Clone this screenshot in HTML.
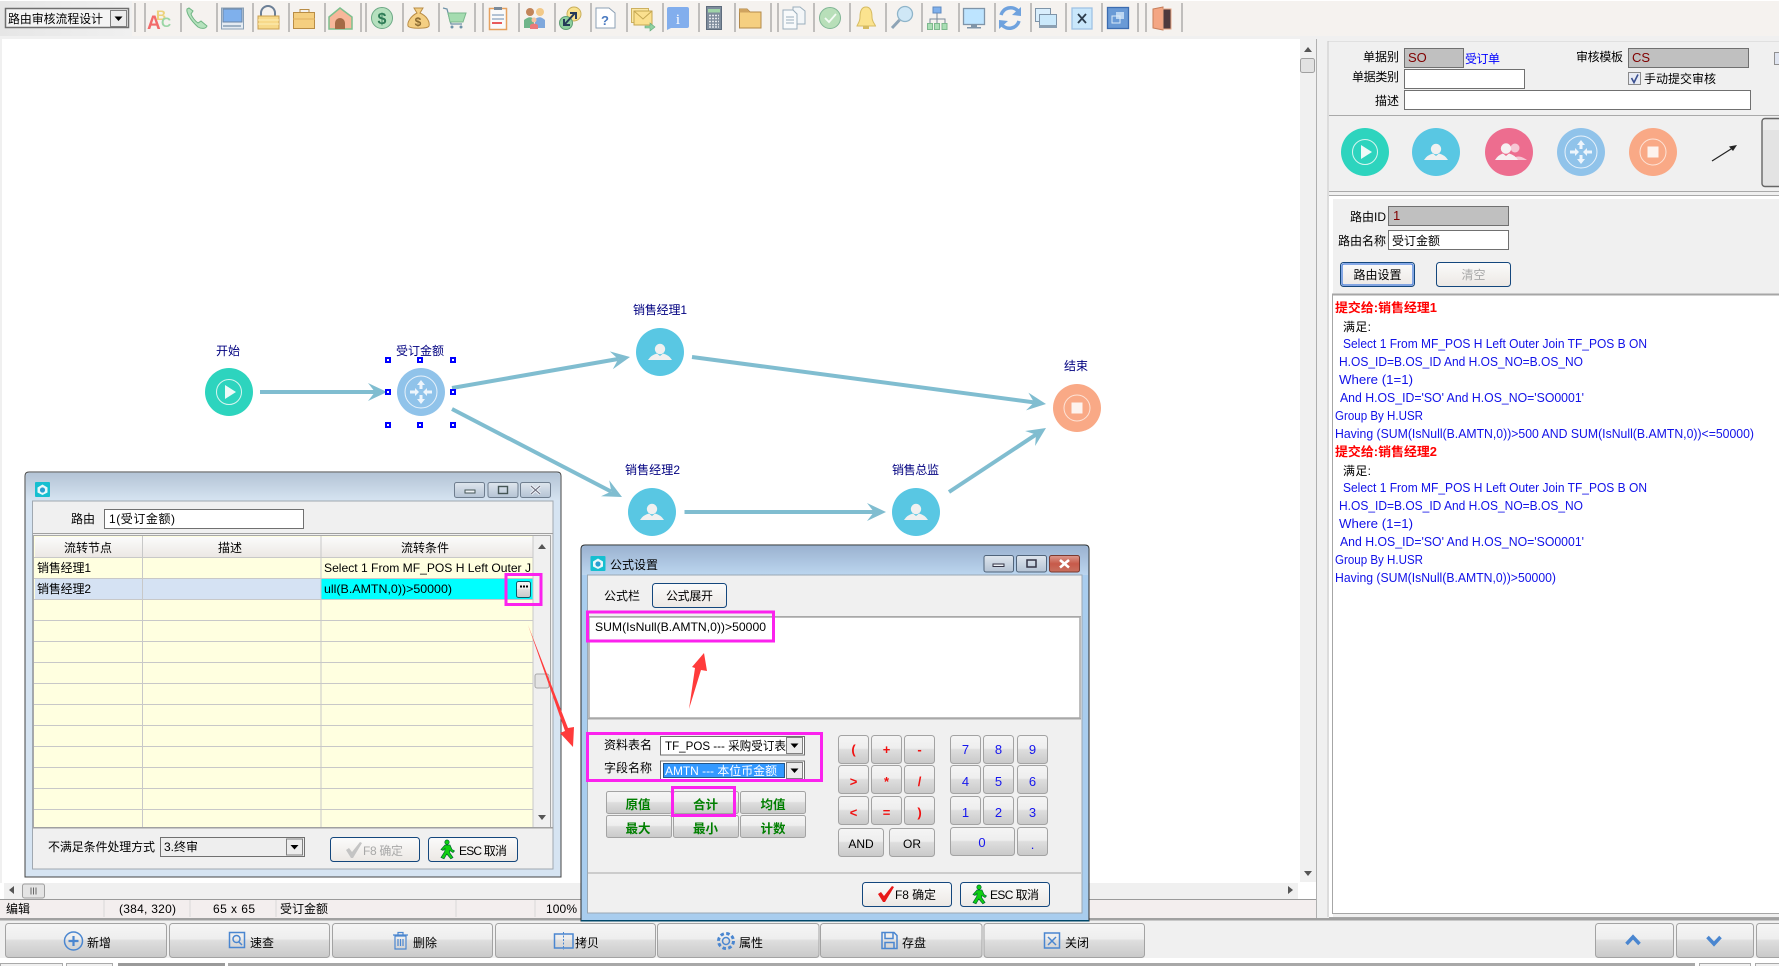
<!DOCTYPE html>
<html lang="zh"><head><meta charset="utf-8"><title>路由审核流程设计</title>
<style>
html,body{margin:0;padding:0;background:#fff;overflow:hidden}
svg{display:block}
text{font-family:"Liberation Sans","Noto Sans CJK SC",sans-serif;font-size:12px;fill:#000}
.c{text-anchor:middle}.r{text-anchor:end}
.b{fill:url(#g);stroke:#a3a3a3;stroke-width:1}
.d{fill:url(#w);stroke:#14477d;stroke-width:1}
.in{fill:#fff;stroke:#707070;stroke-width:1}
.gr{fill:#c0c0c0;stroke:#707070;stroke-width:1}
.m{fill:none;stroke:#fb22ee;stroke-width:3}
.n text,text.n{fill:#000080;font-size:12px}
.bl{fill:#1111e8;font-size:12.5px}
.rd{fill:#ff0000;font-weight:bold;font-size:12.5px}
.gb{fill:#007f00;font-weight:bold;text-anchor:middle;font-size:12.5px}
.cr{fill:#f01010;font-weight:bold;text-anchor:middle;font-size:13px}
.cb{fill:#1616ee;text-anchor:middle;font-size:13px}
.sep{stroke:#8a8a8a;stroke-width:1}
.ar{stroke:#80bdd0;stroke-width:4;fill:none}
.ah{fill:#80bdd0}
.h{fill:#fff;stroke:#0000ff;stroke-width:2}
.ln{stroke:#c8c8c8;stroke-width:1}
.ic{fill:none;stroke:#4a86d0;stroke-width:1.5}
</style></head><body>
<svg xmlns="http://www.w3.org/2000/svg" width="1779" height="966" viewBox="0 0 1779 966">
<defs>
<linearGradient id="g" x1="0" y1="0" x2="0" y2="1"><stop offset="0" stop-color="#f5f5f5"/><stop offset=".45" stop-color="#eeeeee"/><stop offset=".5" stop-color="#dedede"/><stop offset="1" stop-color="#c9c9c9"/></linearGradient>
<linearGradient id="w" x1="0" y1="0" x2="0" y2="1"><stop offset="0" stop-color="#fbfbfb"/><stop offset="1" stop-color="#ece8e4"/></linearGradient>
<linearGradient id="t1" x1="0" y1="0" x2="0" y2="1"><stop offset="0" stop-color="#b4c4d6"/><stop offset="1" stop-color="#d6e4f1"/></linearGradient>
<linearGradient id="t2" x1="0" y1="0" x2="0" y2="1"><stop offset="0" stop-color="#9bb2d0"/><stop offset="1" stop-color="#bcd6ef"/></linearGradient>
<linearGradient id="wb" x1="0" y1="0" x2="0" y2="1"><stop offset="0" stop-color="#dfe6ee"/><stop offset="1" stop-color="#b4c3d4"/></linearGradient>
<linearGradient id="wc" x1="0" y1="0" x2="0" y2="1"><stop offset="0" stop-color="#dd9a8e"/><stop offset=".5" stop-color="#c75a4a"/><stop offset="1" stop-color="#c9705f"/></linearGradient>
<linearGradient id="tl" x1="0" y1="0" x2="1" y2="0"><stop offset="0" stop-color="#e6e6e6"/><stop offset="1" stop-color="#f0f0f0"/></linearGradient>
<g id="person"><circle cx="0" cy="-3" r="5.2" fill="#f0f0f0"/><path d="M-12,8 Q-9,3 -3,1.5 L0,4 L3,1.5 Q9,3 12,8 Z" fill="#f0f0f0"/></g>
<g id="start"><circle r="24" fill="#2dd4be"/><circle r="12.5" fill="none" stroke="#d8f6f0" stroke-width="1"/><path d="M-4,-7 L7,0 L-4,7 Z" fill="#eefaf8"/></g>
<g id="user"><circle r="24" fill="#59c7e3"/><use href="#person"/></g>
<g id="route"><circle r="24" fill="#90c3ea"/><circle r="16" fill="none" stroke="#e8f2fb" stroke-width="1"/>
<path d="M0,-12 L-4,-7 L-1.5,-7 L-1.5,-3 L1.5,-3 L1.5,-7 L4,-7 Z M0,12 L-4,7 L-1.5,7 L-1.5,3 L1.5,3 L1.5,7 L4,7 Z M-2,0 L-6,-4 L-6,-1.5 L-11,-1.5 L-11,1.5 L-6,1.5 L-6,4 Z M2,0 L6,-4 L6,-1.5 L11,-1.5 L11,1.5 L6,1.5 L6,4 Z" fill="#eef5fc"/></g>
<g id="stop"><circle r="24" fill="#f9a986"/><circle r="13" fill="none" stroke="#fde4d8" stroke-width="1"/><rect x="-5.5" y="-5.5" width="11" height="11" fill="#fdf3ee"/></g>
<g id="appic"><rect x="0" y="0" width="15" height="15" rx="1" fill="#16bfd0"/><path d="M7.5,2.5 L12.5,5.5 L12.5,10.5 L7.5,13 L2.5,10.5 L2.5,5.5 Z" fill="#eaf8fa"/><circle cx="7.5" cy="8" r="2.6" fill="#2a9fd0"/></g>
<g id="drop"><rect x="0" y="0" width="16" height="16" fill="#ececec" stroke="#808080"/><path d="M4,6 L12,6 L8,10.5 Z" fill="#000"/></g>
<g id="man"><path d="M7,0 a2.2,2.2 0 1 1 0,4.4 a2.2,2.2 0 1 1 0,-4.4 Z M5,5 L10,5 L12,9.5 L14.5,11 L13,12.5 L9.8,10.5 L9.5,12.5 L13,17.5 L10.8,18.8 L6.8,14 L4,18.8 L1,17.5 L4.7,11.5 L5,8.5 L3,10.5 L1,9.5 Z" fill="#10d010" stroke="#063" stroke-width=".7"/></g>
<path id="chk" d="M0,8 L3,6 L6,10 L14,0 L16,1 L7,16 L5,16 Z"/>
</defs>

<!-- base -->
<rect width="1779" height="966" fill="#fff"/>
<rect x="0" y="0" width="1779" height="36" fill="#f5f2ef"/>
<rect x="0" y="0" width="1779" height="1" fill="#fff"/>
<rect x="0" y="36" width="1779" height="3" fill="#f0f0f0"/>
<rect x="0" y="1" width="132" height="35" fill="url(#tl)"/>
<rect x="0" y="39" width="2" height="844" fill="#f0f0f0"/>

<!-- toolbar -->
<rect x="5.5" y="8.5" width="123" height="19" fill="#f4f4f4" stroke="#6f6f6f" stroke-width="1.5"/>
<text x="8" y="23" textLength="95" lengthAdjust="spacingAndGlyphs">路由审核流程设计</text>
<use href="#drop" x="110.5" y="10.5"/>
<g class="sep">
<path d="M135,3V32M145,3V32M181,3V32M217,3V32M253,3V32M289,3V32M325,3V32M361,3V32M366,3V32M403,3V32M439,3V32M475,3V32M483,3V32M519,3V32M555,3V32M591,3V32M627,3V32M663,3V32M699,3V32M735,3V32M771,3V32M778,3V32M814,3V32M850,3V32M886,3V32M922,3V32M959,3V32M995,3V32M1031,3V32M1066,3V32M1102,3V32M1138,3V32M1146,3V32M1182,3V32"/>
</g>
<!-- A B C -->
<text x="147" y="29" style="font-size:19px;font-weight:bold;fill:#f26a6a">A</text>
<text x="156" y="20" style="font-size:14px;font-weight:bold;fill:#ecd27c">B</text>
<text x="161" y="27" style="font-size:14px;font-weight:bold;fill:#9bd6a6">C</text>
<!-- phone -->
<path d="M187,9 C186,12 190,20 198,27 C201,29 206,29 207,26 L201,21 L198,23 C195,21 192,17 191,14 L193,11 L189,8 Z" fill="#b5e2bd" stroke="#6fb584"/>
<!-- monitor -->
<rect x="221.5" y="8" width="22" height="21" fill="#e4ebf2" stroke="#8aa0b5"/><rect x="223" y="9" width="19" height="13" fill="#7fb0ec" stroke="#6a85a5"/><rect x="223" y="25" width="18" height="2" fill="#9fb2c4"/>
<!-- lock -->
<path d="M261,16 V13 a7,7 0 0 1 14,0 V16" fill="none" stroke="#6b7f96" stroke-width="2"/><rect x="258" y="16" width="21" height="13" fill="#f7d98a" stroke="#caa04f"/><path d="M258,20H279M258,24H279" stroke="#fdeeb8"/>
<!-- case -->
<path d="M300,13 V9.500 H309 V13" fill="none" stroke="#b98d46"/><rect x="293.500" y="12.500" width="21" height="16" fill="#f5cf80" stroke="#b98d46"/><path d="M293,19H315" stroke="#e1b260"/>
<!-- house -->
<path d="M340,8 L352,17 L352,29 L329,29 L329,17 Z" fill="#f7b79a" stroke="#7cc08e" stroke-width="1.500"/><path d="M335,29 V23 a5,5 0 0 1 10,0 V29 Z" fill="#a46a45"/>
<!-- $ -->
<circle cx="382" cy="18" r="10.500" fill="#b5e0be" stroke="#6ca985"/><text x="382" y="24" class="c" style="font-size:16px;font-weight:bold;fill:#2d7a55">$</text>
<!-- bag -->
<path d="M414,8 L423,8 L420,13 C427,16 430,22 429,26 C428,29 410,29 408,26 C407,22 411,16 417,13 Z" fill="#f4cf83" stroke="#b98d46"/><text x="418" y="26" class="c" style="font-size:12px;font-weight:bold;fill:#8a6a30">$</text>
<!-- cart -->
<path d="M443,8 L447,9 L451,24 L462,24" fill="none" stroke="#6f93a8" stroke-width="1.300"/><path d="M448,13 L466,13 L463,22 L450,22 Z" fill="#a5dcb0" stroke="#79b78c"/><circle cx="452" cy="27" r="1.500" fill="#6f93a8"/><circle cx="461" cy="27" r="1.500" fill="#6f93a8"/>
<!-- clipboard -->
<rect x="489.500" y="8.500" width="17" height="21" fill="#fafafa" stroke="#e6a15f" stroke-width="1.500"/><rect x="494" y="7" width="8" height="3" fill="#7a8a9a"/><path d="M492,15H504M492,19H504" stroke="#9ab0c8" stroke-width="1.500"/><path d="M492,23H502" stroke="#e85a5a" stroke-width="2"/>
<!-- people -->
<circle cx="530" cy="12" r="4" fill="#c2855a"/><circle cx="540" cy="12" r="4" fill="#f2c988"/><path d="M524,28 V20 Q530,15 534,19 V28 Z" fill="#6fb58a"/><path d="M535,28 V19 Q540,15 545,20 V28 Z" fill="#7fa8dc"/><circle cx="534" cy="20" r="2.500" fill="#f5c3a0"/><path d="M530,29 V25 Q534,22 538,25 V29 Z" fill="#ea7a7a"/>
<!-- resize -->
<circle cx="574" cy="14" r="7" fill="#f8e28e" stroke="#c9ae5a"/><circle cx="566" cy="23" r="6.500" fill="#8ecf9e" stroke="#5f9f75"/><path d="M565,24 L575,13 M570,13 H576 V19 M564,19 V25 H570" fill="none" stroke="#243a58" stroke-width="2"/>
<!-- doc ? -->
<path d="M596,8 H609 L615,13 V28 H596 Z" fill="#fff" stroke="#8ca0b4"/><text x="605" y="25" class="c" style="font-size:13px;font-weight:bold;fill:#4a7ac0">?</text>
<!-- mail -->
<rect x="631.500" y="8.500" width="17" height="14" fill="#fbe7a3" stroke="#cdb060"/><rect x="634" y="11" width="18" height="14" fill="#fbe08f" stroke="#c5a752"/><path d="M634,11 L643,19 L652,11" fill="none" stroke="#c5a752"/><path d="M645,26 H650 V23 L655,27 L650,31 V28 H645 Z" fill="#8fd2a2" stroke="#62a87a" stroke-width=".6"/>
<!-- info -->
<path d="M669,7 H687 Q689,7 689,9 V26 Q689,28 687,28 H671 L667,30 V9 Q667,7 669,7 Z" fill="#82aeed"/><text x="678" y="24" class="c" style="font-size:15px;font-family:'Liberation Serif',serif;fill:#fff">i</text>
<!-- calc -->
<rect x="706.500" y="6.500" width="15" height="23" fill="#7e8c9c" stroke="#5e6c7c"/><rect x="708" y="9" width="12" height="3.500" fill="#9fd4a8"/><path d="M709,15.500H719M709,18.500H719M709,21.500H719M709,24.500H719M709,27H719" stroke="#e4e8ec" stroke-width="1.500" stroke-dasharray="2 1"/>
<!-- folder -->
<path d="M739.500,9 H747 L750,12 H761 V28 H739.500 Z" fill="#f5cf80" stroke="#b3894a"/><path d="M739.500,9 H747 L750,12.500 H739.500 Z" fill="#cfa35f"/>
<!-- copy docs -->
<path d="M793,7 H800 L805,11 V24 H793 Z" fill="#f3f6f8" stroke="#9aaebc"/><path d="M783,10 H793 L797,14 V29 H783 Z" fill="#f8fafb" stroke="#9aaebc"/><path d="M786,17H794M786,20H794M786,23H794" stroke="#9aaebc"/>
<!-- check -->
<circle cx="830" cy="18" r="10.500" fill="#b8dfb9" stroke="#7fb594"/><path d="M825,18 L829,22 L836,14" fill="none" stroke="#f4fbf5" stroke-width="1.800"/>
<!-- bell -->
<path d="M866,7 C871,7 872,12 872,17 C872,22 875,24 875.500,26 H857 C857.500,24 860,22 860,17 C860,12 861,7 866,7 Z" fill="#fbe38f" stroke="#d6bb62"/><rect x="863" y="26" width="6" height="3" fill="#d6bb62"/>
<!-- magnifier -->
<circle cx="905" cy="14" r="7.500" fill="#cfe7f6" stroke="#8fb4c9" stroke-width="1.300"/><path d="M899.500,20 L892,28" stroke="#8da3b5" stroke-width="3"/>
<!-- org -->
<rect x="933" y="7" width="8" height="6" fill="#7fb0ec" stroke="#5f8ac0"/><path d="M937,13 V19 M930,24 V19 H945 V24 M937,19 V24" fill="none" stroke="#7a8a9a"/><rect x="927.500" y="23.500" width="5" height="6" fill="#a9dfb4" stroke="#7eb88e"/><rect x="934.500" y="23.500" width="5" height="6" fill="#a9dfb4" stroke="#7eb88e"/><rect x="942" y="23.500" width="5" height="6" fill="#a9dfb4" stroke="#7eb88e"/>
<!-- monitor 2 -->
<rect x="963.500" y="8.500" width="21" height="16" fill="#bde4ff" stroke="#7f94a8" stroke-width="1.300"/><rect x="971" y="25" width="6" height="2" fill="#7f94a8"/><rect x="967" y="27" width="14" height="1.500" fill="#7f94a8"/>
<!-- refresh -->
<path d="M1001,15 A10,10 0 0 1 1018,11 M1019,21 A10,10 0 0 1 1002,25" fill="none" stroke="#6fa2de" stroke-width="3.500"/><path d="M1021,7 L1021,16 L1012,15 Z M999,29 L999,20 L1008,21 Z" fill="#6fa2de"/>
<!-- windows -->
<rect x="1035.500" y="8.500" width="15" height="13" fill="#d9eefc" stroke="#7f94a8"/><rect x="1039.500" y="14.500" width="17" height="13" fill="#cbe9fb" stroke="#7f94a8"/><rect x="1039" y="25" width="18" height="3" fill="#8ca0b2"/>
<!-- x -->
<rect x="1072" y="8" width="20" height="21" fill="#c9e7fb" stroke="#9fc2e4" stroke-width="1.300"/><path d="M1078,14 L1086,23 M1086,14 L1078,23" stroke="#2d3d4d" stroke-width="1.800"/>
<!-- blue win -->
<rect x="1107.500" y="7.500" width="21" height="21" fill="#6a9ad6" stroke="#3c6cb0" stroke-width="1.300"/><rect x="1116" y="12" width="8" height="7" fill="#bcd6f2"/><rect x="1112" y="16" width="8" height="7" fill="none" stroke="#dbe9f8"/>
<!-- door -->
<path d="M1153,9 L1163,7 V30 L1153,28 Z" fill="#f4a683" stroke="#c77e5a"/><rect x="1163" y="9" width="8" height="20" fill="#4e3a3e" stroke="#e8a684"/>

<!-- flow diagram -->
<g>
<path class="ar" d="M260,392H376"/><polygon class="ah" points="387,392 368,383 375,392 368,401"/>
<path class="ar" d="M452,388L618,359"/><polygon class="ah" points="630,357 612.800,369.200 618.200,359.100 609.800,351.400"/>
<path class="ar" d="M452,409L611,491.500"/><polygon class="ah" points="622,497 601,496.300 611.300,491.500 609.200,480.300"/>
<path class="ar" d="M692,357L1034,402.400"/><polygon class="ah" points="1046,404 1026,410.400 1034.100,402.400 1028.400,392.600"/>
<path class="ar" d="M684.500,512H874"/><polygon class="ah" points="886,512 867,521 874,512 867,503"/>
<path class="ar" d="M949,492L1036,434.600"/><polygon class="ah" points="1046,428 1035.100,446 1036,434.600 1025.100,431"/>
</g>
<use href="#start" x="229" y="392"/>
<use href="#route" x="421" y="392"/>
<use href="#user" x="660" y="352"/>
<use href="#user" x="652" y="512"/>
<use href="#user" x="916" y="512"/>
<use href="#stop" x="1077" y="408"/>
<g class="n">
<text x="216" y="355" textLength="24">开始</text>
<text x="396" y="355" textLength="48">受订金额</text>
<text x="633" y="314" textLength="54">销售经理1</text>
<text x="625" y="474" textLength="55">销售经理2</text>
<text x="892" y="474" textLength="47">销售总监</text>
<text x="1064" y="370" textLength="24">结束</text>
</g>
<g class="h">
<rect x="386" y="358" width="4" height="4"/><rect x="418" y="358" width="4" height="4"/><rect x="451" y="358" width="4" height="4"/>
<rect x="386" y="390" width="4" height="4"/><rect x="451" y="390" width="4" height="4"/>
<rect x="386" y="423" width="4" height="4"/><rect x="418" y="423" width="4" height="4"/><rect x="451" y="423" width="4" height="4"/>
</g>

<!-- main scrollbars -->
<rect x="1300" y="39" width="16" height="843" fill="#f0f0f0"/>
<path d="M1304,52 L1312,52 L1308,47 Z" fill="#555"/>
<rect x="1300.500" y="58.500" width="14" height="14" rx="2" fill="#e2e2e2" stroke="#a0a0a0"/>
<path d="M1304,871 L1312,871 L1308,876 Z" fill="#555"/>
<rect x="4" y="883" width="1294" height="16" fill="#f0f0f0"/>
<path d="M14,886 L14,894 L9,890 Z" fill="#555"/>
<rect x="22.500" y="884" width="22" height="14" rx="2" fill="#e4e4e4" stroke="#a0a0a0"/>
<path d="M31,887.500V894.500M33.500,887.500V894.500M36,887.500V894.500" stroke="#666"/>
<path d="M1288,886 L1288,894 L1293,890 Z" fill="#555"/>
<rect x="0" y="899" width="1316" height="1" fill="#9a9a9a"/>
<rect x="0" y="900" width="1316" height="18" fill="#f3eeee"/>
<path d="M104,900V917M190,900V917M276,900V917M456,900V917M535,900V917" stroke="#d8d8d8"/>
<text x="6" y="913" textLength="24">编辑</text>
<text x="119" y="913" textLength="57">(384, 320)</text>
<text x="213" y="913" textLength="42">65 x 65</text>
<text x="280" y="913" textLength="48">受订金额</text>
<text x="546" y="913" textLength="31">100%</text>

<!-- right panel -->
<rect x="1316" y="39" width="463" height="879" fill="#f0f0f0"/>
<rect x="1316" y="39" width="1" height="879" fill="#b0b0b0"/>
<rect x="1328" y="41" width="451" height="1" fill="#e0e0e0"/>
<rect x="1327.500" y="41" width="1" height="876" fill="#c8c8c8"/>
<text x="1399" y="61" class="r" textLength="36">单据别</text>
<rect class="gr" x="1404.500" y="48.500" width="59" height="19"/>
<text x="1408" y="62" style="fill:#800000;font-size:13px">SO</text>
<text x="1465" y="63" style="fill:#0000ff" textLength="35">受订单</text>
<text x="1623" y="61" class="r" textLength="47">审核模板</text>
<rect class="gr" x="1628.500" y="48.500" width="120" height="19"/>
<text x="1632" y="62" style="fill:#800000;font-size:13px">CS</text>
<rect x="1774.500" y="52.500" width="8" height="12" fill="#dfe4f0" stroke="#909090"/>
<text x="1399" y="81" class="r" textLength="47">单据类别</text>
<rect class="in" x="1404.500" y="69.500" width="120" height="19"/>
<rect x="1628.500" y="72.500" width="12" height="12" fill="#e8ebf4" stroke="#8a8a8a"/>
<path d="M1631.500,78 L1634,82.500 L1638,74.500" fill="none" stroke="#3a4f90" stroke-width="1.600"/>
<text x="1644" y="83" textLength="72">手动提交审核</text>
<text x="1399" y="105" class="r" textLength="24">描述</text>
<rect class="in" x="1404.500" y="90.500" width="346" height="19"/>
<rect x="1329" y="115" width="450" height="1" fill="#a9a9a9"/>
<use href="#start" x="1365" y="152"/>
<use href="#user" x="1436" y="152"/>
<g transform="translate(1509,152)"><circle r="24" fill="#ed6d8f"/><circle cx="6" cy="-4" r="4.500" fill="#f6c6d4"/><path d="M3,8 Q8,1 18,8 Z" fill="#f6c6d4"/><circle cx="-3" cy="-3.500" r="5.200" fill="#f6f0f2"/><path d="M-14,8 Q-11,3 -6,1.500 L-3,4 L0,1.500 Q6,3 9,8 Z" fill="#f6f0f2"/></g>
<use href="#route" x="1581" y="152"/>
<use href="#stop" x="1653" y="152"/>
<path d="M1712,161 L1735,146.500" stroke="#222" stroke-width="1.200"/><path d="M1737,145 L1729,146.500 L1733,151 Z" fill="#222"/>
<rect x="1762" y="118.500" width="30" height="68" rx="3" fill="#e3e3e3" stroke="#666" stroke-width="1.400"/>
<rect x="1763" y="120" width="20" height="10" fill="#ececec"/>
<rect x="1329" y="191" width="450" height="1" fill="#a9a9a9"/>
<rect x="1329" y="195" width="450" height="1" fill="#a9a9a9"/>
<rect x="1329" y="196" width="450" height="3" fill="#fff"/>
<rect x="1329" y="196" width="4" height="721" fill="#fff"/>
<text x="1386" y="221" class="r" textLength="36">路由ID</text>
<rect class="gr" x="1388.500" y="206.500" width="120" height="19"/>
<text x="1393" y="220" style="fill:#800000;font-size:13px">1</text>
<text x="1386" y="245" class="r" textLength="48">路由名称</text>
<rect class="in" x="1388.500" y="230.500" width="120" height="19"/>
<text x="1392" y="245" textLength="48">受订金额</text>
<rect class="d" x="1340.500" y="262.500" width="74" height="24" rx="3" style="stroke:#14477d"/>
<rect x="1342" y="264" width="71" height="21" rx="2" fill="none" stroke="#5f8ee0" stroke-width="1.500"/>
<text x="1377.500" y="279" class="c" textLength="48">路由设置</text>
<rect class="d" x="1436.500" y="262.500" width="74" height="24" rx="3"/>
<text x="1473.500" y="279" class="c" style="fill:#a8a8a8" textLength="24">清空</text>
<rect x="1332" y="294" width="447" height="619" fill="#fff"/>
<rect x="1332" y="293.500" width="447" height="2" fill="#a6a6a6"/>
<rect x="1332" y="295" width="1" height="618" fill="#a6a6a6"/>
<rect x="1332" y="913" width="447" height="1" fill="#a6a6a6"/>
<rect x="1329" y="917" width="450" height="1" fill="#a6a6a6"/>

<text class="rd" x="1335" y="312" textLength="102" lengthAdjust="spacingAndGlyphs">提交给:销售经理1</text>
<text x="1343" y="331" textLength="28">满足:</text>
<text class="bl" x="1343" y="348" textLength="304" lengthAdjust="spacingAndGlyphs">Select 1 From MF_POS H Left Outer Join TF_POS B ON</text>
<text class="bl" x="1339" y="366" textLength="244" lengthAdjust="spacingAndGlyphs">H.OS_ID=B.OS_ID And H.OS_NO=B.OS_NO</text>
<text class="bl" x="1339" y="384" textLength="74" lengthAdjust="spacingAndGlyphs">Where (1=1)</text>
<text class="bl" x="1340" y="402" textLength="244" lengthAdjust="spacingAndGlyphs">And H.OS_ID='SO' And H.OS_NO='SO0001'</text>
<text class="bl" x="1335" y="420" textLength="88" lengthAdjust="spacingAndGlyphs">Group By H.USR</text>
<text class="bl" x="1335" y="438" textLength="419" lengthAdjust="spacingAndGlyphs">Having (SUM(IsNull(B.AMTN,0))&gt;500 AND SUM(IsNull(B.AMTN,0))&lt;=50000)</text>
<text class="rd" x="1335" y="456" textLength="102" lengthAdjust="spacingAndGlyphs">提交给:销售经理2</text>
<text x="1343" y="475" textLength="28">满足:</text>
<text class="bl" x="1343" y="492" textLength="304" lengthAdjust="spacingAndGlyphs">Select 1 From MF_POS H Left Outer Join TF_POS B ON</text>
<text class="bl" x="1339" y="510" textLength="244" lengthAdjust="spacingAndGlyphs">H.OS_ID=B.OS_ID And H.OS_NO=B.OS_NO</text>
<text class="bl" x="1339" y="528" textLength="74" lengthAdjust="spacingAndGlyphs">Where (1=1)</text>
<text class="bl" x="1340" y="546" textLength="244" lengthAdjust="spacingAndGlyphs">And H.OS_ID='SO' And H.OS_NO='SO0001'</text>
<text class="bl" x="1335" y="564" textLength="88" lengthAdjust="spacingAndGlyphs">Group By H.USR</text>
<text class="bl" x="1335" y="582" textLength="221" lengthAdjust="spacingAndGlyphs">Having (SUM(IsNull(B.AMTN,0))&gt;50000)</text>

<!-- left window -->
<path d="M25,877 V476 Q25,472 29,472 H557 Q561,472 561,476 V877 Z" fill="#d6e4f2" stroke="#444" stroke-width="1"/>
<path d="M26,501 V476 Q26,473 29,473 H557 Q560,473 560,476 V501 Z" fill="url(#t1)"/>
<use href="#appic" x="35" y="482"/>
<g stroke="#6f7e8f"><rect x="454.500" y="482.500" width="30" height="15" rx="2" fill="url(#wb)"/><rect x="488" y="482.500" width="30" height="15" rx="2" fill="url(#wb)"/><rect x="520.500" y="482.500" width="30" height="15" rx="2" fill="url(#wb)"/></g>
<rect x="465" y="490" width="10" height="3" fill="#eef2f7" stroke="#455"/><rect x="498.500" y="486.500" width="9" height="7" fill="none" stroke="#455" stroke-width="1.400"/><path d="M531,486 L540,494 M540,486 L531,494" stroke="#eef2f7" stroke-width="3"/><path d="M531,486 L540,494 M540,486 L531,494" stroke="#667" stroke-width="1"/>
<rect x="32.500" y="501" width="520.500" height="368" fill="#f0f0f0" stroke="#a0a8b0"/>
<text x="71" y="523" textLength="24">路由</text>
<rect class="in" x="104.500" y="509.500" width="199" height="19"/>
<text x="109" y="523" textLength="66">1(受订金额)</text>
<rect x="33" y="533" width="520" height="1" fill="#a0a0a0"/>
<rect x="34" y="536" width="499" height="291" fill="#ffffe0"/>
<rect x="35" y="537" width="498" height="20" fill="url(#w)"/>
<rect x="35" y="578" width="107.500" height="21" fill="#d5e2f3"/><rect x="142.500" y="578" width="178.500" height="21" fill="#d5e2f3"/>
<rect x="321" y="578" width="212" height="21" fill="#00ffff"/>
<path class="ln" d="M34,557.500H533M34,578.500H533M34,599.500H533M34,620.500H533M34,641.500H533M34,662.500H533M34,683.500H533M34,704.500H533M34,725.500H533M34,746.500H533M34,767.500H533M34,788.500H533M34,809.500H533M142.500,536V827M321,536V827M533,536V827"/>
<rect x="33.500" y="535.500" width="517" height="292" fill="none" stroke="#a8a8a8"/>
<rect x="534" y="537" width="16" height="290" fill="#f0f0f0"/>
<path d="M538,549 L546,549 L542,544 Z" fill="#555"/>
<rect x="535" y="674" width="14" height="14" rx="2" fill="#e4e4e4" stroke="#a8a8a8"/>
<path d="M538,815 L546,815 L542,820 Z" fill="#555"/>
<text x="64" y="552" textLength="48">流转节点</text>
<text x="218" y="552" textLength="24">描述</text>
<text x="401" y="552" textLength="48">流转条件</text>
<text x="37" y="572" textLength="54">销售经理1</text>
<text x="37" y="593" textLength="54">销售经理2</text>
<text x="324" y="572" textLength="207" lengthAdjust="spacingAndGlyphs">Select 1 From MF_POS H Left Outer J</text>
<text x="324" y="593" textLength="128" lengthAdjust="spacingAndGlyphs">ull(B.AMTN,0))&gt;50000)</text>
<rect x="516.500" y="581.500" width="14" height="16" rx="2" fill="url(#g)" stroke="#0a5a6a"/>
<path d="M520,586.500h2M523,586.500h2M526,586.500h2" stroke="#000" stroke-width="2"/>
<rect class="m" x="506" y="574.500" width="35" height="30"/>
<rect x="33" y="827" width="520" height="1.500" fill="#a0a0a0"/>
<text x="48" y="851" textLength="107">不满足条件处理方式</text>
<rect x="160.500" y="837.500" width="144" height="19" fill="#eeeeee" stroke="#707070"/>
<text x="164" y="851" textLength="34">3.终审</text>
<use href="#drop" x="286.500" y="839"/>
<rect class="d" x="330.500" y="837.500" width="89" height="24" rx="3"/>
<use href="#chk" x="346" y="842" style="fill:#c4c4c4"/>
<text x="363" y="855" style="fill:#a8a8a8" textLength="40">F8 确定</text>
<rect class="d" x="428.500" y="837.500" width="89" height="24" rx="3"/>
<use href="#man" x="440" y="840"/>
<text x="459" y="855" textLength="48">ESC 取消</text>

<!-- red arrow 1 -->
<polygon points="528,625 568,728 574,727 573,747 560,733 565,731" fill="#ff3b3b"/>

<!-- bottom bar -->
<rect x="0" y="918" width="1779" height="2.500" fill="#a0a0a0"/>
<rect x="0" y="920.500" width="1779" height="38" fill="#f0f0f0"/>
<rect x="0" y="958" width="1779" height="5" fill="#fff"/>
<rect x="228" y="963" width="1467" height="3" fill="#a8a8a8"/>
<rect x="0.500" y="963.500" width="62" height="5" fill="#f0f0f0" stroke="#aaa"/>
<rect x="66.500" y="963.500" width="46" height="5" fill="#f0f0f0" stroke="#aaa"/>
<rect x="118" y="963" width="107" height="3" fill="#9a9a9a"/>
<rect x="1699.500" y="963.500" width="51" height="5" fill="#f0f0f0" stroke="#aaa"/>
<rect x="1755.500" y="963.500" width="30" height="5" fill="#f0f0f0" stroke="#aaa"/>
<g class="b">
<rect x="5.500" y="923.500" width="161" height="34" rx="3"/><rect x="169.500" y="923.500" width="160" height="34" rx="3"/><rect x="332.500" y="923.500" width="160" height="34" rx="3"/><rect x="495.500" y="923.500" width="160" height="34" rx="3"/><rect x="657.500" y="923.500" width="161.500" height="34" rx="3"/><rect x="820.500" y="923.500" width="161.500" height="34" rx="3"/><rect x="984" y="923.500" width="160.500" height="34" rx="3"/><rect x="1595.500" y="923.500" width="78" height="34" rx="3"/><rect x="1676.500" y="923.500" width="77" height="34" rx="3"/><rect x="1756.500" y="923.500" width="40" height="34" rx="3"/>
</g>
<circle class="ic" cx="73.500" cy="941" r="9"/><path class="ic" d="M73.500,936V946M68.500,941H78.500" style="stroke-width:2.200"/>
<text x="87" y="947" textLength="24">新增</text>
<rect class="ic" x="229.500" y="932.500" width="15" height="15"/><circle class="ic" cx="236.500" cy="939" r="3.500"/><path class="ic" d="M239,942 L242,945"/>
<text x="250" y="947" textLength="24">速查</text>
<path class="ic" d="M395,936 H406 V949 H395 Z M393,935 H408 M398,935 V932.500 H403 V935 M398,939V946M400.500,939V946M403,939V946" style="stroke-width:1.200"/>
<text x="413" y="947" textLength="24">删除</text>
<path class="ic" d="M554.500,934 H573 V948 H554.500 Z" /><path d="M563.500,932V950" stroke="#4a86d0" stroke-dasharray="2 1.500"/>
<text x="575" y="947" textLength="24">拷贝</text>
<circle class="ic" cx="726" cy="941" r="3.500"/><circle cx="726" cy="941" r="7.500" fill="none" stroke="#4a86d0" stroke-width="3" stroke-dasharray="3.500 2.390"/>
<text x="739" y="947" textLength="24">属性</text>
<path class="ic" d="M882,932.500 H894 L897,935.500 V948.500 H882 Z M885,933V938.500H893V933 M885,948V942.500H894V948"/>
<text x="902" y="947" textLength="24">存盘</text>
<rect class="ic" x="1044.500" y="933" width="15" height="15"/><path class="ic" d="M1048,937 L1056,945 M1056,937 L1048,945"/>
<text x="1065" y="947" textLength="24">关闭</text>
<path d="M1626.500,944 L1633,937 L1639.500,944" fill="none" stroke="#4a86d0" stroke-width="3.500"/>
<path d="M1707.500,937 L1714,944 L1720.500,937" fill="none" stroke="#4a86d0" stroke-width="3.500"/>

<!-- formula window -->
<path d="M581,921 V549 Q581,545 585,545 H1085 Q1089,545 1089,549 V921 Z" fill="#a9cdee" stroke="#2a2a2a" stroke-width="1"/>
<path d="M582,575 V549 Q582,546 585,546 H1085 Q1088,546 1088,549 V575 Z" fill="url(#t2)"/>
<rect x="581" y="920" width="508" height="1.500" fill="#00486a"/>
<use href="#appic" x="590.500" y="556"/>
<text x="610" y="569" textLength="48">公式设置</text>
<rect x="984" y="555.500" width="29.500" height="16.500" rx="2" fill="url(#wb)" stroke="#50647a"/>
<rect x="1016.500" y="555.500" width="30" height="16.500" rx="2" fill="url(#wb)" stroke="#50647a"/>
<rect x="1049.500" y="555.500" width="30" height="16.500" rx="2" fill="url(#wc)" stroke="#7a3a30"/>
<rect x="993" y="564" width="11" height="2.500" fill="#eef2f7" stroke="#334"/>
<rect x="1027" y="560" width="9" height="7" fill="none" stroke="#334" stroke-width="1.500"/>
<path d="M1060,560 L1069,567.500 M1069,560 L1060,567.500" stroke="#fff" stroke-width="2.600"/>
<rect x="587.500" y="575" width="494.500" height="338" fill="#f0f0f0" stroke="#9aa8b4"/>
<text x="604" y="600" textLength="36">公式栏</text>
<rect class="d" x="652.500" y="583.500" width="74" height="24" rx="3"/>
<text x="689.500" y="600" class="c" textLength="47">公式展开</text>
<rect x="588" y="616" width="493" height="1" fill="#a8a8a8"/>
<rect x="589" y="617" width="491" height="101" fill="#fff" stroke="#a8a8a8" stroke-width="1.500"/>
<rect x="588" y="718" width="493" height="1.500" fill="#a8a8a8"/>
<text x="595" y="631" textLength="171" lengthAdjust="spacingAndGlyphs">SUM(IsNull(B.AMTN,0))&gt;50000</text>
<rect class="m" x="587.500" y="612" width="186" height="29"/>
<polygon points="704,653 707,671 701,670 689,709 695,668 692,667" fill="#ff3b3b"/>
<text x="604" y="749" textLength="48">资料表名</text>
<rect class="in" x="660.500" y="736.500" width="144" height="18.500"/>
<text x="665" y="750" textLength="121" lengthAdjust="spacingAndGlyphs">TF_POS --- 采购受订表</text>
<use href="#drop" x="786.500" y="737.500"/>
<text x="604" y="772" textLength="48">字段名称</text>
<rect class="in" x="660.500" y="761" width="144" height="19"/>
<rect x="663" y="763" width="122" height="15" fill="#3399ff"/>
<rect x="663.500" y="763.500" width="121" height="14" fill="none" stroke="#111" stroke-dasharray="1 1"/>
<text x="665" y="775" style="fill:#fff" textLength="112" lengthAdjust="spacingAndGlyphs">AMTN --- 本位币金额</text>
<use href="#drop" x="786.500" y="762.500"/>
<rect class="m" x="587.500" y="733.500" width="234" height="47"/>
<g class="b">
<rect x="606.500" y="791.500" width="65" height="22" rx="2"/><rect x="673.500" y="791.500" width="65" height="22" rx="2"/><rect x="740.500" y="791.500" width="65" height="22" rx="2"/>
<rect x="606.500" y="815.500" width="65" height="22" rx="2"/><rect x="673.500" y="815.500" width="65" height="22" rx="2"/><rect x="740.500" y="815.500" width="65" height="22" rx="2"/>
<rect x="838.500" y="735.500" width="30" height="28" rx="3"/><rect x="871.500" y="735.500" width="30" height="28" rx="3"/><rect x="904.500" y="735.500" width="30" height="28" rx="3"/>
<rect x="950.500" y="735.500" width="30" height="28" rx="3"/><rect x="983.500" y="735.500" width="30" height="28" rx="3"/><rect x="1017.500" y="735.500" width="30" height="28" rx="3"/>
<rect x="838.500" y="765.500" width="30" height="28" rx="3"/><rect x="871.500" y="765.500" width="30" height="28" rx="3"/><rect x="904.500" y="765.500" width="30" height="28" rx="3"/>
<rect x="950.500" y="765.500" width="30" height="28" rx="3"/><rect x="983.500" y="765.500" width="30" height="28" rx="3"/><rect x="1017.500" y="765.500" width="30" height="28" rx="3"/>
<rect x="838.500" y="796.500" width="30" height="28" rx="3"/><rect x="871.500" y="796.500" width="30" height="28" rx="3"/><rect x="904.500" y="796.500" width="30" height="28" rx="3"/>
<rect x="950.500" y="796.500" width="30" height="28" rx="3"/><rect x="983.500" y="796.500" width="30" height="28" rx="3"/><rect x="1017.500" y="796.500" width="30" height="28" rx="3"/>
<rect x="838.500" y="828.500" width="45" height="28" rx="3"/><rect x="889.500" y="828.500" width="45" height="28" rx="3"/>
<rect x="950.500" y="827.500" width="64" height="28" rx="3"/><rect x="1017.500" y="827.500" width="30" height="28" rx="3"/>
</g>
<rect class="m" x="672.500" y="787.500" width="62" height="28"/>
<text class="gb" x="638" y="809">原值</text><text class="gb" x="705.500" y="809">合计</text><text class="gb" x="773" y="809">均值</text>
<text class="gb" x="638" y="833">最大</text><text class="gb" x="705.500" y="833">最小</text><text class="gb" x="773" y="833">计数</text>
<text class="cr" x="853.500" y="754">(</text><text class="cr" x="886.500" y="754">+</text><text class="cr" x="919.500" y="754">-</text>
<text class="cr" x="853.500" y="786">&gt;</text><text class="cr" x="886.500" y="786">*</text><text class="cr" x="919.500" y="786">/</text>
<text class="cr" x="853.500" y="817">&lt;</text><text class="cr" x="886.500" y="817">=</text><text class="cr" x="919.500" y="817">)</text>
<text class="cb" x="965.500" y="754">7</text><text class="cb" x="998.500" y="754">8</text><text class="cb" x="1032.500" y="754">9</text>
<text class="cb" x="965.500" y="786">4</text><text class="cb" x="998.500" y="786">5</text><text class="cb" x="1032.500" y="786">6</text>
<text class="cb" x="965.500" y="817">1</text><text class="cb" x="998.500" y="817">2</text><text class="cb" x="1032.500" y="817">3</text>
<text class="cb" x="982" y="847">0</text><text class="cb" x="1032.500" y="849">.</text>
<text x="861" y="848" class="c">AND</text><text x="912" y="848" class="c">OR</text>
<rect x="588" y="872.500" width="493" height="1" fill="#a8a8a8"/>
<rect class="d" x="862.500" y="882.500" width="89" height="24" rx="3"/>
<use href="#chk" x="878" y="886" style="fill:#e81818"/>
<text x="895" y="899" textLength="41">F8 确定</text>
<rect class="d" x="960.500" y="882.500" width="89" height="24" rx="3"/>
<use href="#man" x="972" y="885"/>
<text x="990" y="899" textLength="49">ESC 取消</text>
</svg>
</body></html>
